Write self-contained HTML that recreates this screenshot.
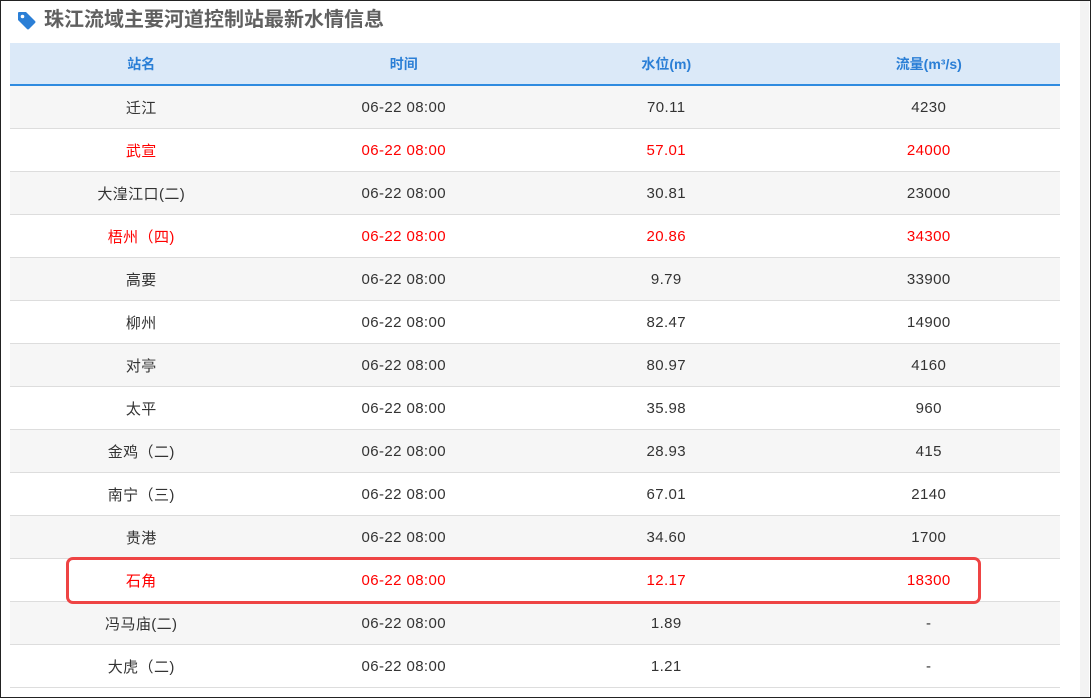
<!DOCTYPE html>
<html><head><meta charset="utf-8"><style>
*{margin:0;padding:0;box-sizing:border-box}
body{width:1091px;height:698px;overflow:hidden;background:#fff;font-family:"Liberation Sans","Noto Sans CJK SC",sans-serif;position:relative}
.frame{position:absolute;left:0;top:0;width:1091px;height:698px;border:1px solid #222;}
.strip{position:absolute;left:1080px;top:1px;width:9px;height:696px;background:#f3f3f3}
.title{position:absolute;left:44px;top:6px;font-size:20px;font-weight:bold;color:#606060;line-height:28px}
table{position:absolute;left:10px;top:43px;width:1050px;border-collapse:collapse;table-layout:fixed}
th{height:42px;background:#dbe9f8;color:#2b7fd6;font-size:14px;font-weight:bold;border-bottom:2px solid #2f8be0}
td{height:43px;text-align:center;font-size:15px;letter-spacing:0.4px;color:#333;border-bottom:1px solid #ddd;padding-top:1px}
tr:nth-child(odd) td{background:#f6f6f6}
tr.r td{color:#f00}
.box{position:absolute;left:66px;top:557px;width:915px;height:47px;border:3px solid #ee4444;border-radius:7px}
</style></head><body>
<div class="frame"></div><div class="strip"></div>
<svg style="position:absolute;left:17px;top:11px" width="20" height="20" viewBox="0 0 20 20"><path d="M1 2 Q1 1 2 1 H9 L18 10 Q19 11 18 12 L12 18 Q11 19 10 18 L1 9 Z" fill="#2b7fd6"/><circle cx="5.5" cy="5.5" r="1.8" fill="#fff"/></svg>
<div class="title">珠江流域主要河道控制站最新水情信息</div>
<table>
<thead><tr><th>站名</th><th>时间</th><th>水位(m)</th><th>流量(m³/s)</th></tr></thead>
<tbody>
<tr><td>迁江</td><td>06-22 08:00</td><td>70.11</td><td>4230</td></tr>
<tr class="r"><td>武宣</td><td>06-22 08:00</td><td>57.01</td><td>24000</td></tr>
<tr><td>大湟江口(二)</td><td>06-22 08:00</td><td>30.81</td><td>23000</td></tr>
<tr class="r"><td>梧州（四)</td><td>06-22 08:00</td><td>20.86</td><td>34300</td></tr>
<tr><td>高要</td><td>06-22 08:00</td><td>9.79</td><td>33900</td></tr>
<tr><td>柳州</td><td>06-22 08:00</td><td>82.47</td><td>14900</td></tr>
<tr><td>对亭</td><td>06-22 08:00</td><td>80.97</td><td>4160</td></tr>
<tr><td>太平</td><td>06-22 08:00</td><td>35.98</td><td>960</td></tr>
<tr><td>金鸡（二)</td><td>06-22 08:00</td><td>28.93</td><td>415</td></tr>
<tr><td>南宁（三)</td><td>06-22 08:00</td><td>67.01</td><td>2140</td></tr>
<tr><td>贵港</td><td>06-22 08:00</td><td>34.60</td><td>1700</td></tr>
<tr class="r"><td>石角</td><td>06-22 08:00</td><td>12.17</td><td>18300</td></tr>
<tr><td>冯马庙(二)</td><td>06-22 08:00</td><td>1.89</td><td>-</td></tr>
<tr><td>大虎（二)</td><td>06-22 08:00</td><td>1.21</td><td>-</td></tr>
</tbody></table>
<div class="box"></div>
</body></html>
